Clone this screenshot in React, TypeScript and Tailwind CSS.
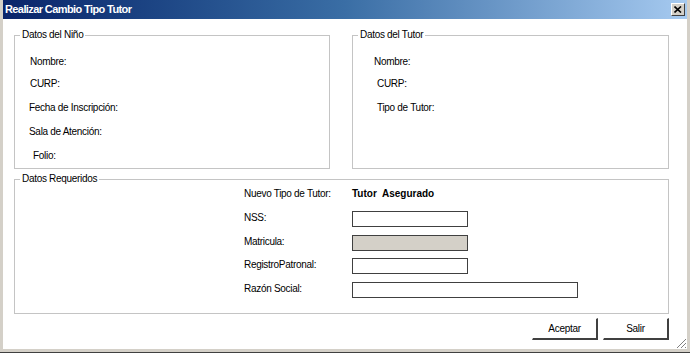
const Label = ({ text, className = "" }: { text: string; className?: string }) => (
  <div className={`leading-[12px] text-[10px] tracking-[-0.3px] text-black ${className}`}>{text}</div>
);

const Group = ({
  title,
  className,
  children,
}: {
  title: string;
  className: string;
  children: React.ReactNode;
}) => (
  <fieldset className={`border border-[#c4c4c4] ${className}`}>
    <legend className="ml-[5px] px-[2px] text-[10px] tracking-[-0.3px] leading-[12px] text-black">{title}</legend>
    {children}
  </fieldset>
);

const Button = ({ text }: { text: string }) => (
  <button className="w-[66px] h-[22px] bg-white border-t border-l border-white border-r-2 border-b-2 border-r-[#404040] border-b-[#404040] text-[10px] tracking-[-0.3px] text-black">
    {text}
  </button>
);

const App = () => {
  return (
    <div className="w-[690px] h-[353px] flex flex-col bg-[#d4d0c8] px-[3px] pb-[3px] border-b border-[#404040] font-['Liberation_Sans',Arial,sans-serif]">
      {/* title bar */}
      <div className="h-[19px] flex items-center justify-between bg-gradient-to-r from-[#0a246a] via-[#3a6ea5] to-[#a6caf0]">
        <span className="pl-[2px] text-white font-bold text-[11px] tracking-[-0.6px]">
          Realizar Cambio Tipo Tutor
        </span>
        <div className="mr-[2px] w-[14px] h-[13px] bg-[#d4d0c8] border-t border-l border-white border-r border-b border-r-[#404040] border-b-[#404040] flex items-center justify-center">
          <svg width="8" height="7" viewBox="0 0 8 7">
            <path d="M0.5 0.5 L7 6.5 M7 0.5 L0.5 6.5" stroke="#000" strokeWidth="1.6" />
          </svg>
        </div>
      </div>

      {/* body */}
      <div className="flex-1 relative bg-white pt-[10px] pl-[11px]">
        <div className="w-[655px] flex flex-col">
          <div className="flex gap-[22px]">
            <Group title="Datos del Niño" className="w-[316px] h-[140px]">
              <div className="flex flex-col">
                <Label text="Nombre:" className="mt-[15px] pl-[15px]" />
                <Label text="CURP:" className="mt-[10px] pl-[15px]" />
                <Label text="Fecha de Inscripción:" className="mt-[12px] pl-[14px]" />
                <Label text="Sala de Atención:" className="mt-[12px] pl-[14px]" />
                <Label text="Folio:" className="mt-[12px] pl-[18px]" />
              </div>
            </Group>
            <Group title="Datos del Tutor" className="w-[317px] h-[140px]">
              <div className="flex flex-col">
                <Label text="Nombre:" className="mt-[15px] pl-[21px]" />
                <Label text="CURP:" className="mt-[10px] pl-[24px]" />
                <Label text="Tipo de Tutor:" className="mt-[12px] pl-[24px]" />
              </div>
            </Group>
          </div>

          <Group title="Datos Requeridos" className="mt-[4px] w-[655px] h-[141px]">
            <div className="pl-[229px] flex flex-col">
              <div className="mt-[3px] flex items-center">
                <Label text="Nuevo Tipo de Tutor:" className="w-[108px]" />
                <span className="text-[10px] leading-[12px] font-bold text-black">Tutor&nbsp; Asegurado</span>
              </div>
              <div className="mt-[11px] flex items-center">
                <Label text="NSS:" className="w-[108px] -mt-[2px]" />
                <div className="w-[116px] h-[16px] border border-[#404040] bg-white" />
              </div>
              <div className="mt-[8px] flex items-center">
                <Label text="Matricula:" className="w-[108px] -mt-[2px]" />
                <div className="w-[116px] h-[16px] border border-[#404040] bg-[#d4d0c8]" />
              </div>
              <div className="mt-[7px] flex items-center">
                <Label text="RegistroPatronal:" className="w-[108px] -mt-[2px]" />
                <div className="w-[116px] h-[16px] border border-[#404040] bg-white" />
              </div>
              <div className="mt-[8px] flex items-center">
                <Label text="Razón Social:" className="w-[108px] -mt-[2px]" />
                <div className="w-[226px] h-[16px] border border-[#404040] bg-white" />
              </div>
            </div>
          </Group>

          <div className="mt-[4px] flex justify-end gap-[5px]">
            <Button text="Aceptar" />
            <Button text="Salir" />
          </div>
        </div>

        {/* resize grip */}
        <svg className="absolute right-0 bottom-0" width="12" height="12" viewBox="0 0 12 12">
          <path d="M11 2 L2 11 M11 6 L6 11 M11 10 L10 11" stroke="#808080" strokeWidth="1" />
          <path d="M11 3 L3 11 M11 7 L7 11" stroke="#ffffff" strokeWidth="1" />
        </svg>
      </div>
    </div>
  );
};

export default App;
